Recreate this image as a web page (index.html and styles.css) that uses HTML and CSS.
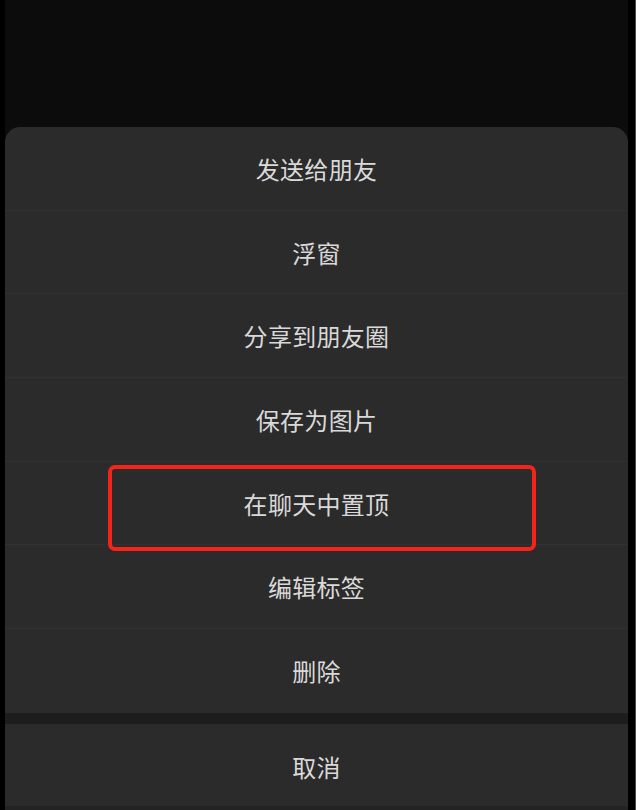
FILE: index.html
```html
<!DOCTYPE html>
<html lang="zh-CN">
<head>
<meta charset="utf-8">
<title>操作菜单</title>
<link rel="stylesheet" href="styles.css">
</head>
<body>
<div class="frame">
  <div class="screen">
    <div class="backdrop"></div>
    <div class="sheet">
      <ul class="menu">
        <li class="item">发送给朋友</li>
        <li class="item">浮窗</li>
        <li class="item">分享到朋友圈</li>
        <li class="item">保存为图片</li>
        <li class="item">在聊天中置顶</li>
        <li class="item">编辑标签</li>
        <li class="item last">删除</li>
      </ul>
      <div class="gap"></div>
      <div class="cancel">取消</div>
      <div class="bottom-edge"></div>
    </div>
  </div>
  <div class="side"></div>
  <div class="highlight"></div>
</div>
</body>
</html>
```
FILE: styles.css
```css
html, body {
  margin: 0;
  padding: 0;
  background: #000;
}
body {
  width: 636px;
  height: 810px;
  overflow: hidden;
  font-family: "Noto Sans CJK SC", "Noto Sans", sans-serif;
}
.frame {
  position: relative;
  display: flex;
  width: 636px;
  height: 810px;
  padding-left: 5px;
  box-sizing: border-box;
}
.screen {
  width: 623px;
  display: flex;
  flex-direction: column;
  background: #0c0c0c;
}
.side {
  flex: 1;
  border-right: 1px solid #4a4a4a;
  background: #000;
}
.backdrop {
  height: 127px;
  flex: none;
}
.sheet {
  flex: 1;
  display: flex;
  flex-direction: column;
  background: #2b2b2b;
  border-radius: 15px 15px 0 0;
  overflow: hidden;
}
.menu {
  list-style: none;
  margin: 0;
  padding: 0;
}
.item {
  height: 83.7px;
  box-sizing: border-box;
  display: flex;
  align-items: center;
  justify-content: center;
  font-size: 24px;
  color: #d9d9d9;
  border-bottom: 1px solid #313131;
  letter-spacing: 0.3px;
}
.item.last {
  border-bottom: none;
}
.gap {
  height: 11px;
  background: #1d1d1d;
}
.cancel {
  height: 82px;
  display: flex;
  align-items: center;
  justify-content: center;
  font-size: 24px;
  color: #d9d9d9;
  letter-spacing: 0.3px;
  padding-top: 4px;
  box-sizing: border-box;
}
.bottom-edge {
  flex: 1;
  background: #232323;
}
.highlight {
  position: absolute;
  left: 108px;
  top: 465px;
  width: 428px;
  height: 86px;
  box-sizing: border-box;
  border: 4px solid #f5241b;
  border-radius: 7px;
}
```
